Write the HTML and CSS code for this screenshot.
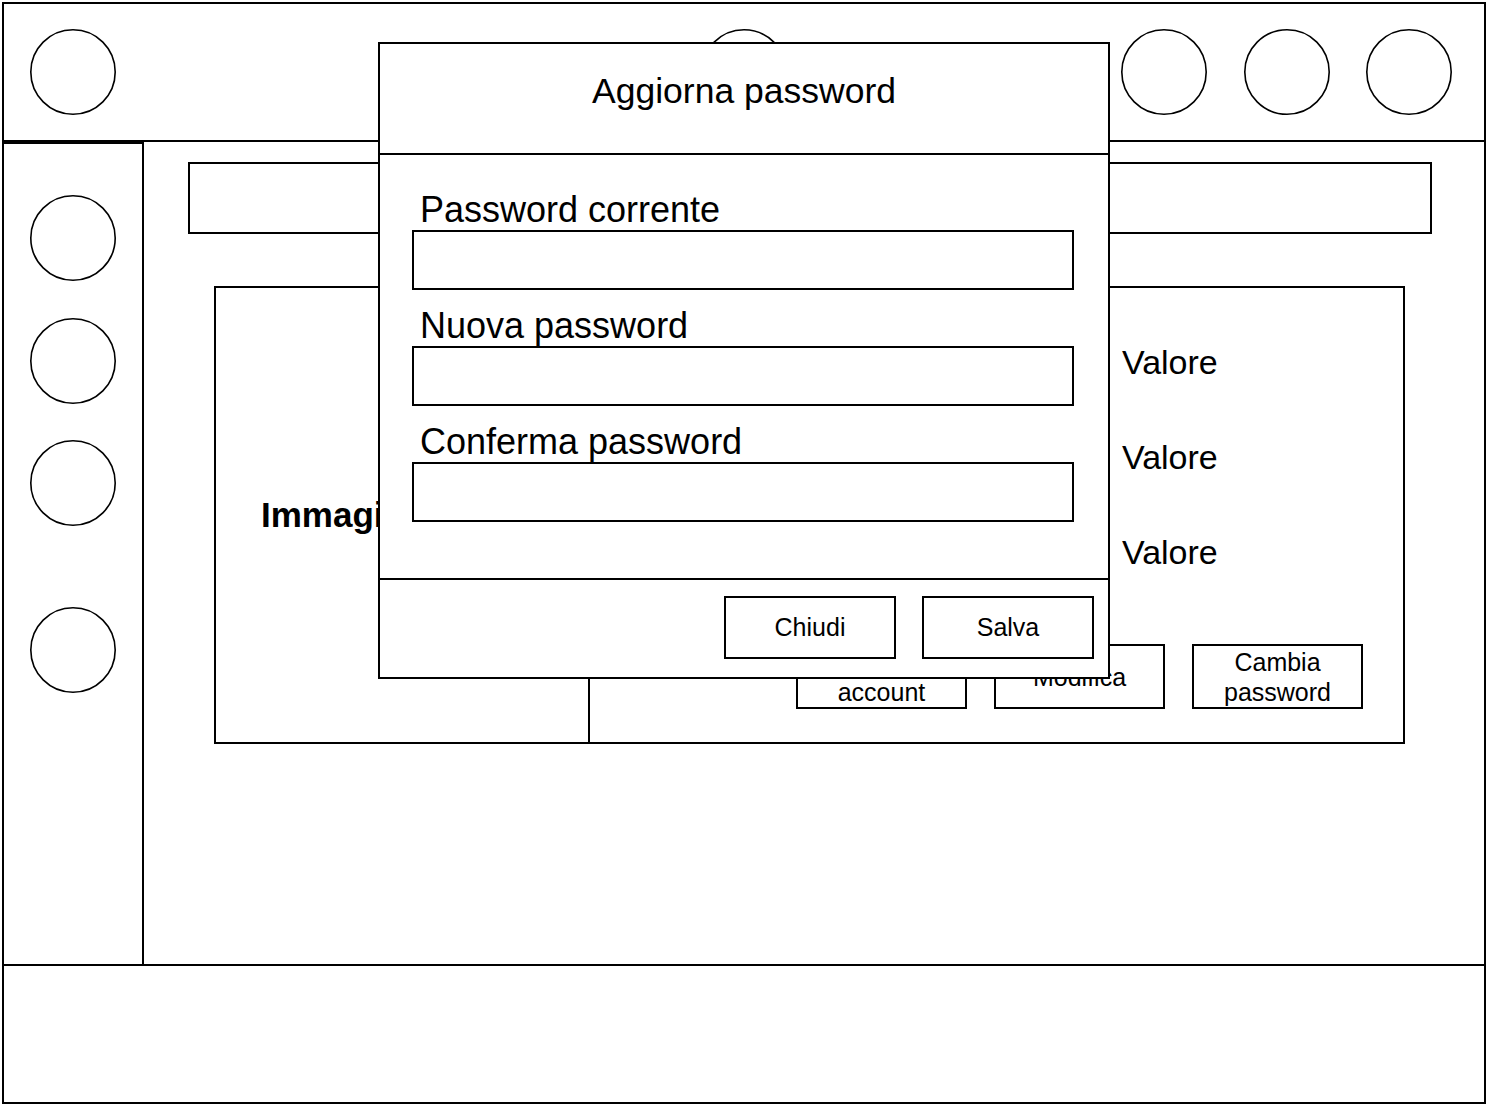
FILE: index.html
```html
<!DOCTYPE html>
<html lang="it">
<head>
<meta charset="utf-8">
<title>Profilo - Aggiorna password</title>
<link rel="stylesheet" href="styles.css">
</head>
<body>
<div class="frame">
  <header class="topbar">
    <div class="tb-left">
      <svg class="dot" viewBox="0 0 88 88"><circle cx="44" cy="44" r="42.2"/></svg>
    </div>
    <div class="tb-mid">
      <svg class="dot" viewBox="0 0 88 88"><circle cx="44" cy="44" r="42.2"/></svg>
    </div>
    <div class="tb-right">
      <svg class="dot" viewBox="0 0 88 88"><circle cx="44" cy="44" r="42.2"/></svg>
      <svg class="dot" viewBox="0 0 88 88"><circle cx="44" cy="44" r="42.2"/></svg>
      <svg class="dot" viewBox="0 0 88 88"><circle cx="44" cy="44" r="42.2"/></svg>
    </div>
  </header>
  <div class="middle">
    <nav class="sidebar">
      <svg class="dot" viewBox="0 0 88 88"><circle cx="44" cy="44" r="42.2"/></svg>
      <svg class="dot" viewBox="0 0 88 88"><circle cx="44" cy="44" r="42.2"/></svg>
      <svg class="dot" viewBox="0 0 88 88"><circle cx="44" cy="44" r="42.2"/></svg>
      <svg class="dot dot-last" viewBox="0 0 88 88"><circle cx="44" cy="44" r="42.2"/></svg>
    </nav>
    <main class="content">
      <input class="search" type="text" aria-label="Cerca">
      <div class="card-wrap">
        <section class="card">
          <div class="photo">Immagine profilo</div>
          <div class="details">
            <div class="fields">
              <span class="key"></span><span class="val">Valore</span>
              <span class="key"></span><span class="val">Valore</span>
              <span class="key"></span><span class="val">Valore</span>
            </div>
            <div class="actions">
              <button class="act">Elimina account</button>
              <button class="act">Modifica</button>
              <button class="act">Cambia password</button>
            </div>
          </div>
        </section>
      </div>
    </main>
  </div>
  <footer class="bottombar"></footer>
</div>

<div class="modal" role="dialog" aria-label="Aggiorna password">
  <div class="modal-head">
    <h2 class="modal-title">Aggiorna password</h2>
  </div>
  <div class="modal-body">
    <div class="field">
      <label class="lbl" for="pw1">Password corrente</label>
      <input class="inp" id="pw1" type="password">
    </div>
    <div class="field">
      <label class="lbl" for="pw2">Nuova password</label>
      <input class="inp" id="pw2" type="password">
    </div>
    <div class="field">
      <label class="lbl" for="pw3">Conferma password</label>
      <input class="inp" id="pw3" type="password">
    </div>
  </div>
  <div class="modal-foot">
    <button class="mbtn">Chiudi</button>
    <button class="mbtn">Salva</button>
  </div>
</div>
</body>
</html>
```

FILE: styles.css
```css
* { box-sizing: border-box; }

html, body {
  margin: 0;
  padding: 0;
  background: #fff;
}

body {
  font-family: "Liberation Sans", Arial, Helvetica, sans-serif;
  color: #000;
  position: relative;
}

.frame {
  margin: 2px;
  width: 1484px;
  height: 1102px;
  border: 2px solid #000;
  display: flex;
  flex-direction: column;
}

.dot {
  display: block;
  width: 88px;
  height: 88px;
  flex: none;
}
.dot circle {
  fill: none;
  stroke: #000;
  stroke-width: 1.6;
}

/* Header */
.topbar {
  height: 138px;
  flex: none;
  border-bottom: 2px solid #000;
  display: grid;
  grid-template-columns: 1fr auto 1fr;
  align-items: center;
  padding: 0 31px 0 25px;
}
.tb-left { justify-self: start; }
.tb-mid { padding-left: 6px; }
.tb-right {
  justify-self: end;
  display: flex;
  gap: 34.5px;
}

/* Middle */
.middle {
  flex: 1;
  display: flex;
  min-height: 0;
}

.sidebar {
  width: 140px;
  flex: none;
  border-top: 2px solid #000;
  border-right: 2px solid #000;
  display: flex;
  flex-direction: column;
  align-items: center;
  padding-top: 50px;
  gap: 34.5px;
}
.dot-last { margin-top: 44.5px; }

.content {
  flex: 1;
  padding: 20px 52px 0 44px;
}

.search {
  display: block;
  width: 100%;
  height: 72px;
  border: 2px solid #000;
  border-radius: 0;
  background: #fff;
  margin: 0;
  padding: 0 12px;
  font: inherit;
  outline: none;
}

.card-wrap {
  padding: 52px 27px 0 26px;
}

.card {
  display: flex;
  border: 2px solid #000;
}

.photo {
  width: 372px;
  flex: none;
  display: flex;
  align-items: center;
  justify-content: center;
  text-align: center;
  font-weight: bold;
  font-size: 35px;
}

.details {
  flex: 1;
  border-left: 2px solid #000;
  padding: 54px 40px 33px 50px;
}

.fields {
  display: grid;
  grid-template-columns: 482px 1fr;
  row-gap: 55px;
  font-size: 34px;
  line-height: 40px;
}
.key, .val { display: block; height: 40px; }

.actions {
  margin-top: 72px;
  display: flex;
  justify-content: flex-end;
  gap: 27px;
}

.act {
  width: 171px;
  height: 65px;
  border: 2px solid #000;
  border-radius: 0;
  background: #fff;
  color: #000;
  font-family: inherit;
  font-size: 25px;
  line-height: 30px;
  padding: 0 8px;
  margin: 0;
}

.bottombar {
  height: 138px;
  flex: none;
  border-top: 2px solid #000;
}

/* Modal */
.modal {
  position: absolute;
  top: 42px;
  left: 50%;
  margin-left: -366px;
  width: 732px;
  border: 2px solid #000;
  background: #fff;
  z-index: 10;
}

.modal-head {
  border-bottom: 2px solid #000;
  padding: 27px 0 42px;
  text-align: center;
}
.modal-title {
  margin: 0;
  font-weight: normal;
  font-size: 35.5px;
  line-height: 40px;
}

.modal-body {
  padding: 35px 34px 56px 32px;
  display: flex;
  flex-direction: column;
  gap: 16px;
}

.field {
  display: flex;
  flex-direction: column;
}

.lbl {
  font-size: 36px;
  line-height: 39px;
  padding-left: 8px;
  margin-bottom: 1px;
}

.inp {
  display: block;
  width: 100%;
  height: 60px;
  border: 2px solid #000;
  border-radius: 0;
  background: #fff;
  margin: 0;
  padding: 0 10px;
  font: inherit;
  outline: none;
}

.modal-foot {
  border-top: 2px solid #000;
  padding: 16px 14px 18px;
  display: flex;
  justify-content: flex-end;
  gap: 26px;
}

.mbtn {
  width: 172px;
  height: 63px;
  border: 2px solid #000;
  border-radius: 0;
  background: #fff;
  color: #000;
  font-family: inherit;
  font-size: 25px;
  padding: 0;
  margin: 0;
}
```
